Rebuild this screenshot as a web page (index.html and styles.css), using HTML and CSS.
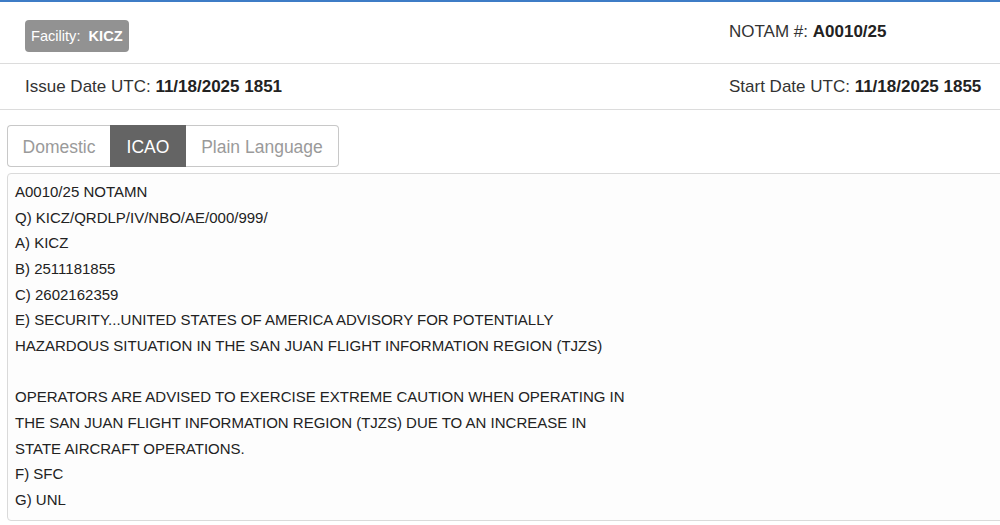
FILE: index.html
```html
<!DOCTYPE html>
<html>
<head>
<meta charset="utf-8">
<link rel="stylesheet" href="styles.css">
</head>
<body>
<div class="page">
  <div class="row row-top">
    <div class="cell"><span class="badge">Facility:&nbsp; <b>KICZ</b></span></div>
    <div class="cell cell-notam">NOTAM #: <b>A0010/25</b></div>
  </div>
  <div class="row row-dates">
    <div class="cell">Issue Date UTC: <b>11/18/2025 1851</b></div>
    <div class="cell">Start Date UTC: <b>11/18/2025 1855</b></div>
  </div>
  <div class="tabs">
    <div class="tab tab-first">Domestic</div>
    <div class="tab tab-active">ICAO</div>
    <div class="tab tab-last">Plain Language</div>
  </div>
  <div class="notam-box"><div class="notam-text">A0010/25 NOTAMN
Q) KICZ/QRDLP/IV/NBO/AE/000/999/
A) KICZ
B) 2511181855
C) 2602162359
E) SECURITY...UNITED STATES OF AMERICA ADVISORY FOR POTENTIALLY
HAZARDOUS SITUATION IN THE SAN JUAN FLIGHT INFORMATION REGION (TJZS)

OPERATORS ARE ADVISED TO EXERCISE EXTREME CAUTION WHEN OPERATING IN
THE SAN JUAN FLIGHT INFORMATION REGION (TJZS) DUE TO AN INCREASE IN
STATE AIRCRAFT OPERATIONS.
F) SFC
G) UNL</div></div>
</div>
</body>
</html>
```

FILE: styles.css
```css
html, body {
  margin: 0;
  padding: 0;
  background: #ffffff;
  overflow: hidden;
}
body {
  font-family: "Liberation Sans", Arial, sans-serif;
  color: #333;
}
.page {
  border-top: 2px solid #3d7cc6;
  width: 1000px;
  height: 523px;
  overflow: hidden;
}
.row {
  display: grid;
  grid-template-columns: 704px 1fr;
  padding-left: 25px;
  border-bottom: 1px solid #dcdcdc;
  font-size: 17px;
}
.row b {
  color: #222;
}
.row-top {
  height: 62px;
  box-sizing: border-box;
  padding-top: 18px;
}
.cell-notam {
  padding-top: 2px;
  line-height: 20px;
}
.badge {
  display: inline-block;
  background: #929292;
  color: #fff;
  font-size: 14.6px;
  height: 32px;
  line-height: 32px;
  padding: 0 6px;
  border-radius: 4px;
}
.badge b {
  color: #fff;
}
.row-dates {
  height: 46px;
  box-sizing: border-box;
  align-items: center;
  line-height: 20px;
}
.tabs {
  display: flex;
  margin: 15px 0 0 7px;
  height: 42px;
}
.tab {
  box-sizing: border-box;
  height: 42px;
  font-size: 17.5px;
  color: #9a9a9a;
  border: 1px solid #c8c8c8;
  background: #fff;
  text-align: center;
  padding: 0;
  line-height: 42px;
}
.tab-first {
  border-radius: 4px 0 0 4px;
  border-right: none;
  width: 103px;
}
.tab-active {
  background: #646464;
  border-color: #646464;
  color: #fff;
  width: 76px;
}
.tab-last {
  border-left: none;
  border-radius: 0 4px 4px 0;
  width: 153px;
}
.notam-box {
  margin: 6px 0 0 7px;
  width: 1010px;
  height: 348px;
  box-sizing: border-box;
  border: 1px solid #dadada;
  border-radius: 4px;
  background: #fdfdfd;
  padding: 5px 7px;
}
.notam-text {
  white-space: pre;
  font-size: 15px;
  line-height: 25.67px;
  color: #222;
}
```
